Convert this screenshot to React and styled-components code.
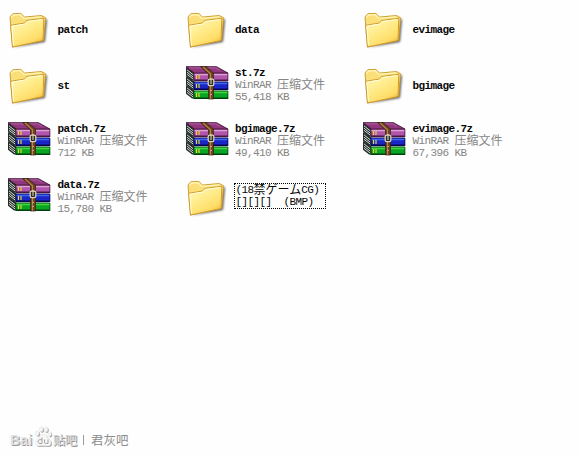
import React from 'react';
import styled, { createGlobalStyle } from 'styled-components';

const GlobalStyle = createGlobalStyle`
  * { box-sizing: border-box; }
  body { margin: 0; background: #fefefe; }
`;

const Window = styled.main`
  width: 580px;
  height: 456px;
  display: flex;
  flex-direction: column;
  justify-content: space-between;
  overflow: hidden;
  padding: 2px 0 5px 4px;
  background: #fefefe;
  font-family: 'Liberation Mono', 'Noto Sans CJK SC', monospace;
`;

const Tiles = styled.div`
  display: grid;
  grid-template-columns: repeat(3, 177.5px);
  grid-auto-rows: 56px;
`;

const Tile = styled.div`
  display: flex;
  align-items: center;
`;

const Icon = styled.svg`
  width: 48px;
  height: 48px;
  flex: none;
`;

const Caption = styled.div`
  margin-left: 5.5px;
  padding-bottom: ${(p) => (p.$detailed ? '2px' : '0')};
  font-size: 11px;
  line-height: 12px;
  letter-spacing: -0.6px;
  white-space: pre;
`;

const FocusCaption = styled(Caption)`
  width: 92px;
  height: 26px;
  margin: 0 0 4px 4px;
  padding: 0 0 0 1px;
  border: 1px dotted #000;
  color: #000;
`;

const Line = styled.div`
  display: flex;
  align-items: center;
  height: 12px;
  color: ${(p) => (p.$muted ? '#858585' : '#080808')};
  font-weight: ${(p) => (p.$bold ? 700 : 400)};
`;

const Wide = styled.span`
  margin-top: -2px;
  font-family: ${(p) => (p.$ja ? "'Noto Sans CJK JP'" : "'Noto Sans CJK SC'")}, sans-serif;
  font-size: 12px;
  line-height: 12px;
  letter-spacing: 0;
`;

const Watermark = styled.div`
  display: flex;
  align-items: center;
  height: 28px;
  padding-left: 6px;
  color: #8c8c8c;
  font-family: 'Noto Sans CJK SC', sans-serif;
  line-height: 24px;
`;

const Brand = styled.span`
  width: 24px;
  padding-top: 5px;
  font: 700 14px/22px 'Liberation Sans', sans-serif;
  letter-spacing: 0.2px;
  color: #e2e2e2;
  text-shadow: 1px 1px 0 #989898;
`;

const Paw = styled.svg`
  width: 19px;
  height: 24px;
  flex: none;
`;

const Service = styled.span`
  width: 30px;
  padding-top: 5px;
  font-size: 12px;
  font-weight: 500;
  color: #d8d8d8;
  text-shadow: 1px 1px 0 #989898;
`;

const Divider = styled.span`
  width: 1px;
  height: 10px;
  margin: 6px 7px 0 0;
  background: #9c9c9c;
`;

const Forum = styled.span`
  padding-top: 5px;
  font-size: 12.5px;
`;

function FolderIcon() {
  return (
    <Icon viewBox="0 0 48 48" aria-hidden="true">
      <defs>
        <linearGradient id="folderFront" x1="0.1" y1="0" x2="0.75" y2="1">
          <stop offset="0" stopColor="#fff8b8" />
          <stop offset="0.5" stopColor="#ffea85" />
          <stop offset="0.8" stopColor="#ffdc68" />
          <stop offset="1" stopColor="#f0b838" />
        </linearGradient>
        <filter id="soften" x="-20%" y="-20%" width="140%" height="140%">
          <feGaussianBlur stdDeviation="0.8" />
        </filter>
      </defs>
      <path d="M9 41.5 41 36 43 14 41 12 37 33Z" fill="#444" opacity="0.85" filter="url(#soften)" />
      <path d="M6 11 8.8 7.700 16.800 7.400 20.500 11 37.500 9.500 41.500 11.800 39.700 34.200 8.500 41Z" fill="#fadf78" stroke="#c99629" strokeWidth="0.9" strokeLinejoin="round" />
      <path d="M7.300 11.600 9.400 9 16.200 8.700 19.900 12.400 36.800 10.900" fill="none" stroke="#fff6b8" strokeWidth="1.3" />
      <path d="M6.600 19.300 20.200 17.100 23 14.400 39.800 12.300 39 34.600 8.500 41Z" fill="url(#folderFront)" stroke="#c99424" strokeWidth="0.9" strokeLinejoin="round" />
      <path d="M7.800 20.200 20.700 18.100 23.400 15.500 38.600 13.500M8 20.500 9.400 39.500" fill="none" stroke="#fffde0" strokeWidth="1" />
    </Icon>
  );
}

const BOOKS = [
  { y: 10.5, main: '#b057ad', light: '#dfa2d5', dark: '#4b143f' },
  { y: 19.5, main: '#1926c8', light: '#4268e8', dark: '#05064e' },
  { y: 28.5, main: '#08a522', light: '#46d343', dark: '#03420e' },
];

function ArchiveIcon() {
  return (
    <Icon viewBox="0 0 48 48" aria-hidden="true">
      {BOOKS.slice().reverse().map((b) => (
        <g key={b.y}>
          <path d={`M4 ${b.y - 5.5} 12.5 ${b.y} 12.500 ${b.y + 8} 10 ${b.y + 8} 4 ${b.y + 3.3}Z`} fill="#222c2b" />
          <path d={`M5 ${b.y - 2.6} 11.5 ${b.y + 2.5}M5 ${b.y - 0.3} 11.5 ${b.y + 4.8}M5 ${b.y + 1.8} 11.5 ${b.y + 6.8}`} stroke="#d5dacd" strokeWidth="1" />
          <path d={`M11.500 ${b.y} H45.500 L46.300 ${b.y + 1} V${b.y + 8.500} H11.500Z`} fill={b.dark} />
          <path d={`M12.500 ${b.y + 0.800} H45.500 V${b.y + 7} H12.500Z`} fill={b.main} />
          <path d={`M12.500 ${b.y + 2} H45.300`} stroke={b.light} strokeWidth="1.600" />
          <path d={`M14.500 ${b.y + 2.500}v4M17 ${b.y + 2.500}v4`} stroke="#e5d53a" strokeWidth="1.200" />
        </g>
      ))}
      <path d="M4 4.700H34.500L45.800 11H12.300Z" fill="#91377f" stroke="#421435" strokeWidth="0.900" />
      <path d="M7 5.900H33.500L38 8.300" fill="none" stroke="#b55ca2" strokeWidth="1" />
      <path d="M18.500 4.500h5.500l7.500 6.500v26h-5V12Z" fill="#684221" stroke="#342010" strokeWidth="0.700" />
      <path d="m21 5 7.500 6.700v25" fill="none" stroke="#b78346" strokeWidth="1.200" />
      <rect x="26.200" y="17.200" width="5.600" height="6.500" rx="1.400" fill="#2c2c2a" stroke="#dad2bd" strokeWidth="1.300" />
      <path d="M29 16v6M29.200 28v1M29.200 32v1" stroke="#eee1b9" strokeWidth="1" />
    </Icon>
  );
}

function Folder({ name }) {
  return (
    <Tile>
      <FolderIcon />
      <Caption><Line $bold>{name}</Line></Caption>
    </Tile>
  );
}

function Archive({ name, size }) {
  return (
    <Tile>
      <ArchiveIcon />
      <Caption $detailed>
        <Line $bold>{name}</Line>
        <Line $muted>WinRAR <Wide>压缩文件</Wide></Line>
        <Line $muted>{size}</Line>
      </Caption>
    </Tile>
  );
}

export default function App() {
  return (
    <Window>
      <GlobalStyle />
      <Tiles>
        <Folder name="patch" />
        <Folder name="data" />
        <Folder name="evimage" />
        <Folder name="st" />
        <Archive name="st.7z" size="55,418 KB" />
        <Folder name="bgimage" />
        <Archive name="patch.7z" size="712 KB" />
        <Archive name="bgimage.7z" size="49,410 KB" />
        <Archive name="evimage.7z" size="67,396 KB" />
        <Archive name="data.7z" size="15,780 KB" />
        <Tile>
          <FolderIcon />
          <FocusCaption>
            <Line>(18<Wide $ja>禁ゲーム</Wide>CG)</Line>
            <Line>{'[][][]  (BMP)'}</Line>
          </FocusCaption>
        </Tile>
      </Tiles>
      <Watermark>
        <Brand>Bai</Brand>
        <Paw viewBox="0 0 19 24" aria-hidden="true">
          <g fill="#a0a0a0" transform="translate(1 1)">
            <ellipse cx="3.3" cy="8.3" rx="1.8" ry="2.5" />
            <ellipse cx="7.2" cy="4.2" rx="1.8" ry="2.6" />
            <ellipse cx="12" cy="4.4" rx="1.8" ry="2.6" />
            <ellipse cx="15.5" cy="9" rx="1.8" ry="2.4" />
            <path d="M9.3 9C6 9 6 12 3 14.400c-3 2.600-1.500 7 2 6.600 3-.4 5-.4 8 0 4 .5 5.300-3.600 2.600-6.300C12.600 12 12.300 9 9.300 9Z" />
          </g>
          <g fill="#f6f6f6" stroke="#dedede" strokeWidth="0.5">
            <ellipse cx="3.3" cy="8.3" rx="1.8" ry="2.5" />
            <ellipse cx="7.2" cy="4.2" rx="1.8" ry="2.6" />
            <ellipse cx="12" cy="4.4" rx="1.8" ry="2.6" />
            <ellipse cx="15.5" cy="9" rx="1.8" ry="2.4" />
            <path d="M9.3 9C6 9 6 12 3 14.400c-3 2.600-1.500 7 2 6.600 3-.4 5-.4 8 0 4 .5 5.300-3.600 2.600-6.300C12.600 12 12.300 9 9.300 9Z" />
          </g>
          <path d="M8 12.500v6H6c-2.500 0-2.500-3.800 0-3.800h2M10.500 14.500v2.700c0 1.300.8 1.500 3.500 1.300v-4" fill="none" stroke="#a2a2a2" strokeWidth="1" />
        </Paw>
        <Service>贴吧</Service>
        <Divider />
        <Forum>君灰吧</Forum>
      </Watermark>
    </Window>
  );
}
